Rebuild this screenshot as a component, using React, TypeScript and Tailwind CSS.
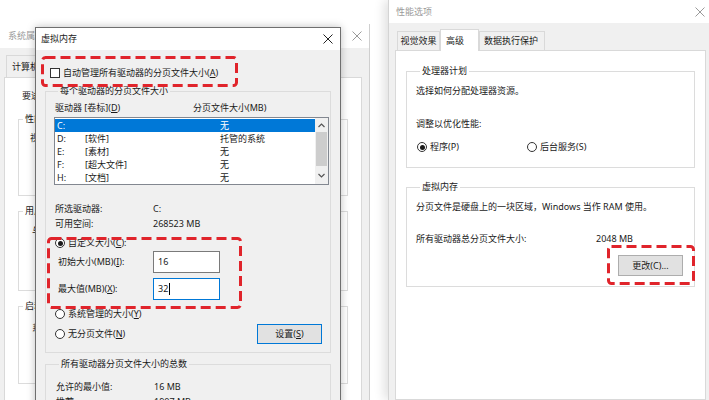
import React from "react";

const Cross = ({ className = "" }: { className?: string }) => (
  <svg width="10" height="10" viewBox="0 0 10 10" className={className}>
    <path d="M0.5 0.5L9.5 9.5M9.5 0.5L0.5 9.5" stroke="currentColor" strokeWidth="1" fill="none" />
  </svg>
);

const Radio = ({ checked = false }: { checked?: boolean }) => (
  <span className="flex h-[10px] w-[10px] shrink-0 items-center justify-center rounded-full border border-[#333] bg-white">
    {checked && <span className="h-[5px] w-[5px] rounded-full bg-[#1a1a1a]" />}
  </span>
);

const Group = ({
  title,
  className = "",
  children,
}: {
  title: string;
  className?: string;
  children?: React.ReactNode;
}) => (
  <fieldset className={`border border-[#dcdcdc] ${className}`}>
    <legend className="ml-[4px] px-[2px] leading-[12px]">{title}</legend>
    {children}
  </fieldset>
);

// red dashed annotation drawn over the screenshot
const Mark = ({ className }: { className: string }) => (
  <svg className={`pointer-events-none absolute ${className}`} width="100%" height="100%">
    <rect
      x="1.5"
      y="1.5"
      width="calc(100% - 3px)"
      height="calc(100% - 3px)"
      rx="3"
      fill="none"
      stroke="#e0242b"
      strokeWidth="3"
      strokeDasharray="10 5"
    />
  </svg>
);

const drives = [
  { d: "C:", label: "", size: "无" },
  { d: "D:", label: "[软件]", size: "托管的系统" },
  { d: "E:", label: "[素材]", size: "无" },
  { d: "F:", label: "[超大文件]", size: "无" },
  { d: "H:", label: "[文档]", size: "无" },
];

const SystemProps = () => (
  <div className="absolute left-0 top-[24px] flex h-[380px] w-[370px] flex-col border-r border-[#cfcfcf] bg-[#f0f0f0]">
    <div className="flex h-[24px] items-center justify-between bg-white pl-[8px] pr-[7px] text-[#9a9a9a]">
      <span>系统属性</span>
      <Cross />
    </div>
    <div className="mt-[7px] flex pl-[6px]">
      {["计算机名", "硬件", "高级", "系统保护", "远程"].map((t, i) => (
        <div
          key={t}
          className={`flex h-[22px] items-center border border-b-0 border-[#d9d9d9] px-[5px] ${
            i === 2 ? "bg-white" : "bg-[#f0f0f0]"
          }`}
        >
          {t}
        </div>
      ))}
    </div>
    <div className="ml-[4px] flex w-[358px] flex-1 flex-col border border-[#d9d9d9] bg-white">
      <div className="ml-[17px] mt-[12px] h-[12px]">要进行大多数更改，你必须作为管理员登录。</div>
      <Group title="性能" className="ml-[13px] mt-[11px] h-[83px] w-[330px]">
        <div className="ml-[11px] mt-[7px]">视觉效果，处理器计划，内存使用，以及虚拟内存</div>
      </Group>
      <Group title="用户配置文件" className="ml-[13px] mt-[9px] h-[86px] w-[330px]">
        <div className="ml-[13px] mt-[8px]">与登录帐户相关的桌面设置</div>
      </Group>
      <Group title="启动和故障恢复" className="ml-[13px] mt-[9px] h-[84px] w-[330px]">
        <div className="ml-[13px] mt-[10px]">系统启动、系统故障和调试信息</div>
      </Group>
    </div>
  </div>
);

const VirtualMemory = () => (
  <div className="absolute left-[35px] top-[27px] flex h-[390px] w-[306px] flex-col border border-[#6f6f6f] bg-[#f0f0f0] shadow-[0_0_8px_rgba(0,0,0,0.25)]">
    <div className="flex h-[22px] shrink-0 items-center justify-between bg-white pl-[5px] pr-[7px]">
      <span>虚拟内存</span>
      <Cross className="text-[#222]" />
    </div>

    <div className="mt-[17px] flex h-[12px] items-center gap-[3px] pl-[14px]">
      <span className="h-[10px] w-[10px] border border-[#333] bg-white" />
      <span>
        自动管理所有驱动器的分页文件大小(<u>A</u>)
      </span>
    </div>

    <Group title="每个驱动器的分页文件大小" className="ml-[9px] mt-[6px] w-[286px] pb-[8px] pl-[8px]">
      <div className="mt-[5px] flex h-[12px] items-center">
        <span className="w-[139px] pl-[1px]">
          驱动器 [卷标](<u>D</u>)
        </span>
        <span>分页文件大小(MB)</span>
      </div>

      <div className="mt-[3px] flex h-[68px] w-[275px] border border-[#828790] bg-white">
        <div className="flex-1 pt-[1px]">
          {drives.map((r, i) => (
            <div
              key={r.d}
              className={`flex h-[13px] items-center pl-[2px] ${i === 0 ? "bg-[#0078d7] text-white" : ""}`}
            >
              <span className="w-[28px]">{r.d}</span>
              <span className="w-[135px]">{r.label}</span>
              <span>{r.size}</span>
            </div>
          ))}
        </div>
        <div className="flex w-[13px] flex-col bg-[#f0f0f0]">
          <div className="flex h-[14px] items-center justify-center">
            <svg width="7" height="5" viewBox="0 0 7 5">
              <path d="M0.5 4L3.5 1L6.5 4" stroke="#555" strokeWidth="1.2" fill="none" />
            </svg>
          </div>
          <div className="mx-[1px] h-[34px] bg-[#cdcdcd]" />
          <div className="flex flex-1 items-center justify-center">
            <svg width="7" height="5" viewBox="0 0 7 5">
              <path d="M0.5 1L3.5 4L6.5 1" stroke="#555" strokeWidth="1.2" fill="none" />
            </svg>
          </div>
        </div>
      </div>

      <div className="mt-[18px] flex h-[12px] items-center">
        <span className="w-[99px] pl-[1px]">所选驱动器:</span>
        <span>C:</span>
      </div>
      <div className="mt-[3px] flex h-[12px] items-center">
        <span className="w-[99px] pl-[1px]">可用空间:</span>
        <span>268523 MB</span>
      </div>

      <div className="ml-[1px] mt-[7px] flex h-[12px] items-center gap-[3px]">
        <Radio checked />
        <span>
          自定义大小(<u>C</u>):
        </span>
      </div>
      <div className="mt-[2px] flex h-[22px] items-center">
        <span className="w-[99px] pl-[4px]">
          初始大小(MB)(<u>I</u>):
        </span>
        <div className="flex h-[22px] w-[67px] items-center border border-[#7a7a7a] bg-white pl-[4px]">16</div>
      </div>
      <div className="mt-[5px] flex h-[22px] items-center">
        <span className="w-[99px] pl-[4px]">
          最大值(MB)(<u>X</u>):
        </span>
        <div className="flex h-[22px] w-[67px] items-center border border-[#0078d7] bg-white pl-[4px]">
          32
          <span className="ml-[1px] h-[12px] w-px bg-black" />
        </div>
      </div>
      <div className="ml-[1px] mt-[8px] flex h-[12px] items-center gap-[3px]">
        <Radio />
        <span>
          系统管理的大小(<u>Y</u>)
        </span>
      </div>
      <div className="mt-[4px] flex h-[20px] items-center justify-between">
        <div className="ml-[1px] flex items-center gap-[3px]">
          <Radio />
          <span>
            无分页文件(<u>N</u>)
          </span>
        </div>
        <div className="mr-[8px] flex h-[20px] w-[65px] items-center justify-center border border-[#0078d7] bg-[#e1e1e1]">
          <span>
            设置(<u>S</u>)
          </span>
        </div>
      </div>
    </Group>

    <Group title="所有驱动器分页文件大小的总数" className="ml-[9px] mt-[5px] w-[286px] pl-[9px]">
      <div className="mt-[11px] flex h-[12px] items-center">
        <span className="w-[99px] pl-[1px]">允许的最小值:</span>
        <span>16 MB</span>
      </div>
      <div className="mt-[3px] flex h-[12px] items-center">
        <span className="w-[99px] pl-[1px]">推荐:</span>
        <span>1907 MB</span>
      </div>
      <div className="mt-[3px] flex h-[12px] items-center">
        <span className="w-[99px] pl-[1px]">当前已分配:</span>
        <span>2048 MB</span>
      </div>
    </Group>
  </div>
);

const PerfOptions = () => (
  <div className="absolute left-[388px] top-0 flex h-[400px] w-[321px] flex-col border-l border-[#d4d4d4] bg-[#f0f0f0] shadow-[-4px_0_10px_rgba(0,0,0,0.12)]">
    <div className="flex h-[23px] shrink-0 items-center justify-between bg-white pl-[7px] pr-[4px] text-[#9a9a9a]">
      <span>性能选项</span>
      <Cross />
    </div>
    <div className="relative z-10 ml-[8px] mt-[6px] flex items-end">
      <div className="flex h-[19px] w-[43px] items-center justify-center border border-b-0 border-[#d9d9d9]">视觉效果</div>
      <div className="-mb-px flex h-[22px] w-[39px] items-center border border-b-0 border-[#d9d9d9] bg-white pl-[5px]">
        高级
      </div>
      <div className="flex h-[19px] w-[66px] items-center border border-b-0 border-[#d9d9d9] pl-[4px]">数据执行保护</div>
    </div>
    <div className="ml-[6px] flex w-[311px] flex-1 flex-col border border-[#d9d9d9] bg-white">
      <Group title="处理器计划" className="ml-[10px] mt-[14px] w-[289px] pb-[14px] pl-[9px]">
        <div className="mt-[8px] h-[12px]">选择如何分配处理器资源。</div>
        <div className="mt-[21px] h-[12px]">调整以优化性能:</div>
        <div className="mt-[11px] flex h-[12px] items-center">
          <div className="ml-[1px] flex w-[110px] items-center gap-[3px]">
            <Radio checked />
            <span>程序(P)</span>
          </div>
          <div className="flex items-center gap-[3px]">
            <Radio />
            <span>后台服务(S)</span>
          </div>
        </div>
      </Group>
      <Group title="虚拟内存" className="ml-[10px] mt-[13px] w-[289px] pb-[10px] pl-[9px]">
        <div className="mt-[8px] h-[12px]">分页文件是硬盘上的一块区域，Windows 当作 RAM 使用。</div>
        <div className="mt-[20px] flex h-[12px] items-center">
          <span className="w-[180px]">所有驱动器总分页文件大小:</span>
          <span>2048 MB</span>
        </div>
        <div className="mt-[10px] flex justify-end pr-[11px]">
          <div className="flex h-[21px] w-[65px] items-center justify-center border border-[#adadad] bg-[#e1e1e1]">
            更改(C)...
          </div>
        </div>
      </Group>
    </div>
  </div>
);

export default function App() {
  return (
    <div className="relative h-[400px] w-[709px] overflow-hidden bg-white font-['Noto_Sans','Noto_Sans_CJK_SC',sans-serif] text-[9px] leading-[12px] text-[#1a1a1a]">
      <SystemProps />
      <VirtualMemory />
      <PerfOptions />
      <Mark className="left-[41px] top-[56px] h-[31px] w-[197px]" />
      <Mark className="left-[47px] top-[237px] h-[72px] w-[195px]" />
      <Mark className="left-[607px] top-[245px] h-[40px] w-[88px]" />
    </div>
  );
}
